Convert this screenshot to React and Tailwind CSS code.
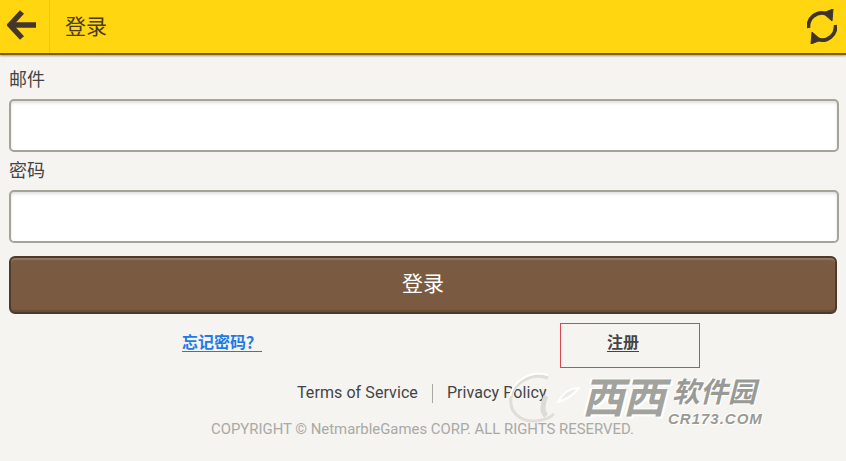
const FONT = 'font-["Roboto","Noto_Sans_CJK_SC",sans-serif]'

function Field({ label }) {
  return (
    <div className="mt-[5px] first:mt-[11px]">
      <div className="h-[33px] text-[18px] leading-[28px] text-[#444]">{label}</div>
      <div className="h-[53px] rounded-[5px] border-2 border-[#a5a499] bg-white shadow-[inset_0_2px_3px_rgba(0,0,0,0.12)]" />
    </div>
  )
}

// watermark laid over the footer
function Watermark() {
  return (
    <div className="absolute left-[508px] top-[372px] h-[62px] w-[260px]">
      <svg width="72" height="62" viewBox="0 0 72 62" fill="none" className="absolute left-0 top-0">
        <path d="M40 6 C24 0 6 10 3 26 C1 40 12 50 28 49 C36 48 42 46 46 42" stroke="#dfded9" strokeWidth="3" />
        <path d="M40 3 C24 -2 5 8 2 24" stroke="#fff" strokeWidth="2" />
        <path d="M50 30 C56 20 62 16 71 16 C66 22 60 27 50 30 Z" stroke="#fff" strokeWidth="2" fill="#ecebe7" />
        <path d="M38 24 C34 32 34 40 38 44" stroke="#dcdbd6" strokeWidth="5" />
      </svg>
      <div className="absolute left-[74px] top-[-2px] whitespace-nowrap text-[42px] font-bold italic leading-[50px] tracking-[-1px] text-[#a3a39e] [font-family:'Noto_Sans_CJK_SC',sans-serif] [text-shadow:-2px_-1px_0_#fff,2px_2px_0_#fff]">
        西西
      </div>
      <div className="absolute left-[164px] top-[2px] whitespace-nowrap text-[28px] font-bold italic leading-[32px] text-[#9a9a95] [font-family:'Noto_Sans_CJK_SC',sans-serif] [text-shadow:-1px_-1px_0_#fff,1px_1px_0_#fff]">
        软件园
      </div>
      <div className="absolute left-[160px] top-[39px] whitespace-nowrap text-[15px] font-bold italic leading-[16px] tracking-[1px] text-[#9a9a95] [font-family:'Liberation_Sans',sans-serif] [text-shadow:-1px_-1px_0_#fff,1px_1px_0_#fff]">
        CR173.COM
      </div>
    </div>
  )
}

export default function App() {
  return (
    <div className={`relative h-[461px] w-[846px] overflow-hidden bg-[#f5f4f1] ${FONT}`}>
      {/* Header */}
      <div className="flex h-[55px] items-stretch border-b-2 border-[#7a5c14] bg-[#ffd60f] shadow-[0_1px_2px_rgba(0,0,0,0.35)]">
        <div className="flex w-[50px] items-center border-r border-[#f0c608] pl-[7px]">
          <svg width="30" height="30" viewBox="0 0 30 30" fill="none" className="mb-[3px]">
            <path d="M4 15 H29" stroke="#44362a" strokeWidth="5.5" />
            <path d="M15 2 L3 15 L15 28" stroke="#44362a" strokeWidth="5.5" />
          </svg>
        </div>
        <div className="flex-1 pl-[15px] text-[21px] leading-[54px] text-[#4a3a20]">登录</div>
        <div className="flex w-[39px] items-start pt-[9px]">
          <svg width="30" height="35" viewBox="0 0 30 35" fill="none">
            <path d="M1.5 19 A13.5 13.5 0 0 1 19 4.6" stroke="#3f342a" strokeWidth="3.8" />
            <path d="M16 4 L26 0 L25 12 Z" fill="#3f342a" stroke="#3f342a" />
            <path d="M28.5 16 A13.5 13.5 0 0 1 11 30.4" stroke="#3f342a" strokeWidth="3.8" />
            <path d="M14 31 L4 35 L5 23 Z" fill="#3f342a" stroke="#3f342a" />
          </svg>
        </div>
      </div>

      {/* Form */}
      <div className="pl-[9px] pr-[7px]">
        <Field label="邮件" />
        <Field label="密码" />
        <button className="mt-[13px] block h-[58px] w-[828px] rounded-[6px] border-2 border-[#4d3a2a] bg-[#7a5b41] text-[21px] text-white shadow-[inset_0_2px_1px_rgba(255,255,255,0.18),inset_0_-2px_1px_rgba(0,0,0,0.15)]">
          登录
        </button>

        {/* Links */}
        <div className="mt-[8px] flex h-[46px] items-center">
          <div className="mb-[4px] ml-[173px] w-[80px]">
            <a className="block whitespace-nowrap border-b border-[#1f7ae8] text-[16px] font-semibold leading-[17px] text-[#1f7ae8]">忘记密码？</a>
          </div>
          <div className="ml-[298px] flex h-[45px] w-[140px] items-center justify-center border border-[#d9474e] pb-[5px] pr-[14px] text-[16px] font-bold text-[#444]">
            <span className="border-b border-[#444] leading-[17px]">注册</span>
          </div>
        </div>
      </div>

      {/* Footer */}
      <div className="mt-[13px] flex items-center pl-[297px] text-[16px] leading-[24px] tracking-[0.08px] text-[#444]">
        <span>Terms of Service</span>
        <span className="mx-[14px] h-[19px] w-px bg-[#a8a8a4]" />
        <span>Privacy Policy</span>
      </div>
      <div className="mt-[14px] whitespace-nowrap pl-[211px] text-[14.9px] leading-[20px] text-[#a9a9a5]">
        COPYRIGHT © NetmarbleGames CORP. ALL RIGHTS RESERVED.
      </div>

      <Watermark />
    </div>
  )
}
